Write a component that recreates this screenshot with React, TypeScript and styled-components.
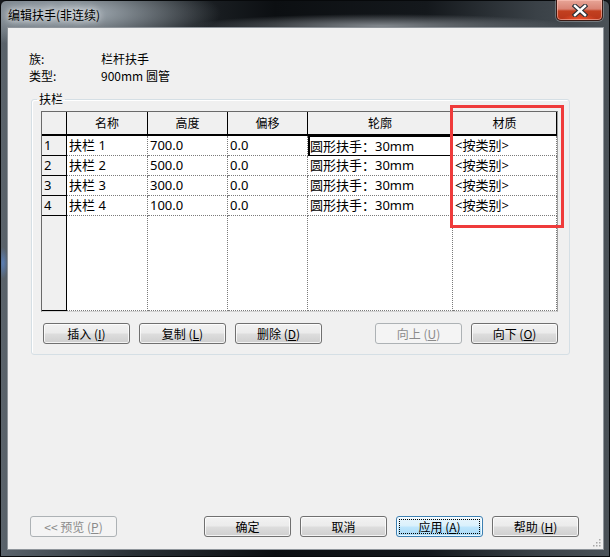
import React from 'react';
import styled, { createGlobalStyle } from 'styled-components';

const GlobalStyle = createGlobalStyle`
  html, body { margin: 0; padding: 0; background: #16191d; }
  body { font-family: "Noto Sans CJK SC", "Noto Sans", sans-serif; }
  #root { width: 610px; height: 557px; }
`;

const CJK = `"Noto Sans CJK SC", "Noto Sans", sans-serif`;
const UI = `"Noto Sans", "Noto Sans CJK SC", sans-serif`;

const Window = styled.div`
  box-sizing: border-box;
  width: 610px;
  height: 557px;
  display: flex;
  flex-direction: column;
  padding: 0 6px 7px 7px;
  border: 1px solid #07090b;
  border-radius: 6px 6px 0 0;
  background:
    radial-gradient(ellipse 150px 34px at 70px 12px, rgba(178, 188, 196, 0.95), rgba(178, 188, 196, 0) 100%),
    radial-gradient(ellipse 190px 12px at 380px 25px, rgba(150, 156, 162, 0.85), rgba(150, 156, 162, 0) 100%),
    radial-gradient(ellipse 5px 16px at 2px 262px, rgba(90, 130, 190, 0.9), rgba(90, 130, 190, 0) 100%),
    linear-gradient(to right, #5a636b 0%, #2a3035 22%, #0c0f12 45%, #14181c 70%, #3a4147 88%, #4a5157 100%);
`;

const TitleBar = styled.div`
  height: 27px;
  display: flex;
  align-items: flex-start;
`;

const TitleText = styled.div`
  margin-top: 7px;
  font: 12px/14px ${CJK};
  color: #000;
  text-shadow: 0 0 6px rgba(255, 255, 255, 0.9), 0 0 10px rgba(255, 255, 255, 0.7);
`;

const CloseButton = styled.div`
  box-sizing: border-box;
  margin-left: auto;
  margin-right: 0;
  margin-top: -1px;
  width: 47px;
  height: 21px;
  border: 1px solid #3a1a14;
  border-top: none;
  border-radius: 0 0 5px 5px;
  display: flex;
  align-items: center;
  justify-content: center;
  background:
    radial-gradient(ellipse 18px 6px at 50% 100%, rgba(255, 90, 50, 0.9), rgba(255, 90, 50, 0) 100%),
    linear-gradient(to bottom, #e7a597 0%, #d98374 45%, #c2401f 55%, #b8351a 100%);
  box-shadow: inset 0 0 0 1px rgba(255, 200, 190, 0.55), 0 0 0 1px rgba(200, 205, 210, 0.35);
`;

const Client = styled.div`
  position: relative;
  flex: 1;
  display: flex;
  flex-direction: column;
  background: #f0f0f0;
  box-shadow: 0 0 0 1px #8f959b;
`;

const InfoGrid = styled.div`
  margin-top: 22px;
  padding-left: 21px;
  display: grid;
  grid-template-columns: 72px auto;
  grid-auto-rows: 17px;
  align-items: center;
  font: 12px/17px ${CJK};
  color: #000;
`;

const Group = styled.fieldset`
  box-sizing: border-box;
  width: 539px;
  min-width: 0;
  margin: 8px 0 0 23px;
  padding: 0;
  border: 1px solid #d5dfe5;
  border-radius: 3px;
  box-shadow: inset 1px 1px 0 #ffffff;
`;

const Legend = styled.legend`
  margin-left: 5px;
  padding: 0 2px;
  font: 12px/14px ${CJK};
  color: #000;
`;

const GroupBody = styled.div`
  padding: 5px 0 10px 9px;
`;

const TableWrap = styled.div`
  position: relative;
  width: 517px;
`;

const Table = styled.div`
  box-sizing: border-box;
  width: 517px;
  display: grid;
  grid-template-columns: 25px 81px 80px 80px 145px 104px;
  grid-template-rows: 24px repeat(4, 20px) 95px;
  border: 1px solid;
  border-color: #6a6a6a #a0a0a0 #d4d4d4 #6a6a6a;
  background: #fff;
`;

const HeaderCell = styled.div`
  box-sizing: border-box;
  background: #f0f0f0;
  border-right: 1px solid #000;
  border-bottom: 2px solid #000;
  text-align: center;
  font: 12px/22px ${CJK};
  color: #000;
`;

const RowNumCell = styled.div`
  box-sizing: border-box;
  background: #f0f0f0;
  border-right: 1px solid #000;
  border-bottom: 1px solid #000;
  padding-left: 2px;
  font: 13px/19px ${UI};
  color: #000;
`;

const DataCell = styled.div<{ $focused?: boolean }>`
  box-sizing: border-box;
  background: #fff;
  border-right: 1px dotted #7a7a7a;
  border-bottom: 1px dotted #7a7a7a;
  padding-left: 2px;
  font: 13px/19px ${UI};
  color: #000;
  white-space: nowrap;
  overflow: hidden;
  ${(p) =>
    p.$focused &&
    `
    border: 1px solid #000;
    border-left-width: 2px;
    padding-left: 0px;
    line-height: 18px;
  `}
`;

const Highlight = styled.div`
  position: absolute;
  left: 409px;
  top: -6px;
  width: 114px;
  height: 123px;
  box-sizing: border-box;
  border: 3px solid #ef3b3b;
  pointer-events: none;
`;

const ButtonRow = styled.div`
  margin-top: 11px;
  padding-left: 2px;
  width: 515px;
  display: flex;
  justify-content: space-between;
`;

const ButtonGroup = styled.div`
  display: flex;
  gap: 9px;
`;

const Button = styled.div<{ $disabled?: boolean; $default?: boolean }>`
  position: relative;
  box-sizing: border-box;
  width: 87px;
  height: 21px;
  border: 1px solid #707070;
  border-radius: 3px;
  background: linear-gradient(to bottom, #f2f2f2 0%, #ebebeb 48%, #dddddd 52%, #cfcfcf 100%);
  box-shadow: inset 0 0 0 1px rgba(255, 255, 255, 0.75);
  display: flex;
  align-items: center;
  justify-content: center;
  font: 12px/19px ${CJK};
  color: #000;
  ${(p) =>
    p.$disabled &&
    `
    border-color: #adb2b5;
    background: #f4f4f4;
    box-shadow: none;
    color: #8b8b8b;
  `}
  ${(p) =>
    p.$default &&
    `
    border-color: #3c7fb1;
    background: linear-gradient(to bottom, #eaf6fd 0%, #d9f0fc 48%, #bee6fd 52%, #a7d9f5 100%);
    &::after {
      content: "";
      position: absolute;
      inset: 2px;
      border: 1px dotted #000;
    }
  `}
`;

const Mnemonic = styled.span`
  text-decoration: underline;
`;

const Footer = styled.div`
  margin-top: auto;
  padding: 0 24px 12px 22px;
  display: flex;
  justify-content: space-between;
`;

const Grip = styled.svg`
  position: absolute;
  right: 2px;
  bottom: 2px;
`;

const rows = [
  { n: '1', name: '扶栏 1', h: '700.0' },
  { n: '2', name: '扶栏 2', h: '500.0' },
  { n: '3', name: '扶栏 3', h: '300.0' },
  { n: '4', name: '扶栏 4', h: '100.0' },
];

const headers = ['', '名称', '高度', '偏移', '轮廓', '材质'];

function Btn({ label, m, disabled, def }: { label: string; m?: string; disabled?: boolean; def?: boolean }) {
  return (
    <Button $disabled={disabled} $default={def}>
      {label}
      {m && (
        <>
          &nbsp;(<Mnemonic>{m}</Mnemonic>)
        </>
      )}
    </Button>
  );
}

export default function App() {
  return (
    <>
      <GlobalStyle />
      <Window>
        <TitleBar>
          <TitleText>编辑扶手(非连续)</TitleText>
          <CloseButton>
            <svg width="16" height="13" viewBox="0 0 16 13">
              <path d="M3 2 L13 11 M13 2 L3 11" stroke="#2a2f36" strokeWidth="4.6" strokeLinecap="square" />
              <path d="M3 2 L13 11 M13 2 L3 11" stroke="#ffffff" strokeWidth="2.4" strokeLinecap="square" />
            </svg>
          </CloseButton>
        </TitleBar>
        <Client>
          <InfoGrid>
            <span>族:</span>
            <span>栏杆扶手</span>
            <span>类型:</span>
            <span>900mm 圆管</span>
          </InfoGrid>
          <Group>
            <Legend>扶栏</Legend>
            <GroupBody>
              <TableWrap>
                <Table>
                  {headers.map((h, i) => (
                    <HeaderCell key={i}>{h}</HeaderCell>
                  ))}
                  {rows.map((r, i) => (
                    <React.Fragment key={r.n}>
                      <RowNumCell>{r.n}</RowNumCell>
                      <DataCell>{r.name}</DataCell>
                      <DataCell>{r.h}</DataCell>
                      <DataCell>0.0</DataCell>
                      <DataCell $focused={i === 0}>圆形扶手：30mm</DataCell>
                      <DataCell>&lt;按类别&gt;</DataCell>
                    </React.Fragment>
                  ))}
                  <RowNumCell />
                  <DataCell />
                  <DataCell />
                  <DataCell />
                  <DataCell />
                  <DataCell />
                </Table>
                <Highlight />
              </TableWrap>
              <ButtonRow>
                <ButtonGroup>
                  <Btn label="插入" m="I" />
                  <Btn label="复制" m="L" />
                  <Btn label="删除" m="D" />
                </ButtonGroup>
                <ButtonGroup>
                  <Btn label="向上" m="U" disabled />
                  <Btn label="向下" m="O" />
                </ButtonGroup>
              </ButtonRow>
            </GroupBody>
          </Group>
          <Footer>
            <Btn label="<< 预览" m="P" disabled />
            <ButtonGroup>
              <Btn label="确定" />
              <Btn label="取消" />
              <Btn label="应用" m="A" def />
              <Btn label="帮助" m="H" />
            </ButtonGroup>
          </Footer>
          <Grip width="10" height="10" viewBox="0 0 10 10">
            {[
              [8, 0],
              [8, 3],
              [5, 3],
              [8, 6],
              [5, 6],
              [2, 6],
            ].map(([x, y], i) => (
              <rect key={i} x={x} y={y + 2} width="1.5" height="1.5" fill="#a8a8a8" />
            ))}
          </Grip>
        </Client>
      </Window>
    </>
  );
}
